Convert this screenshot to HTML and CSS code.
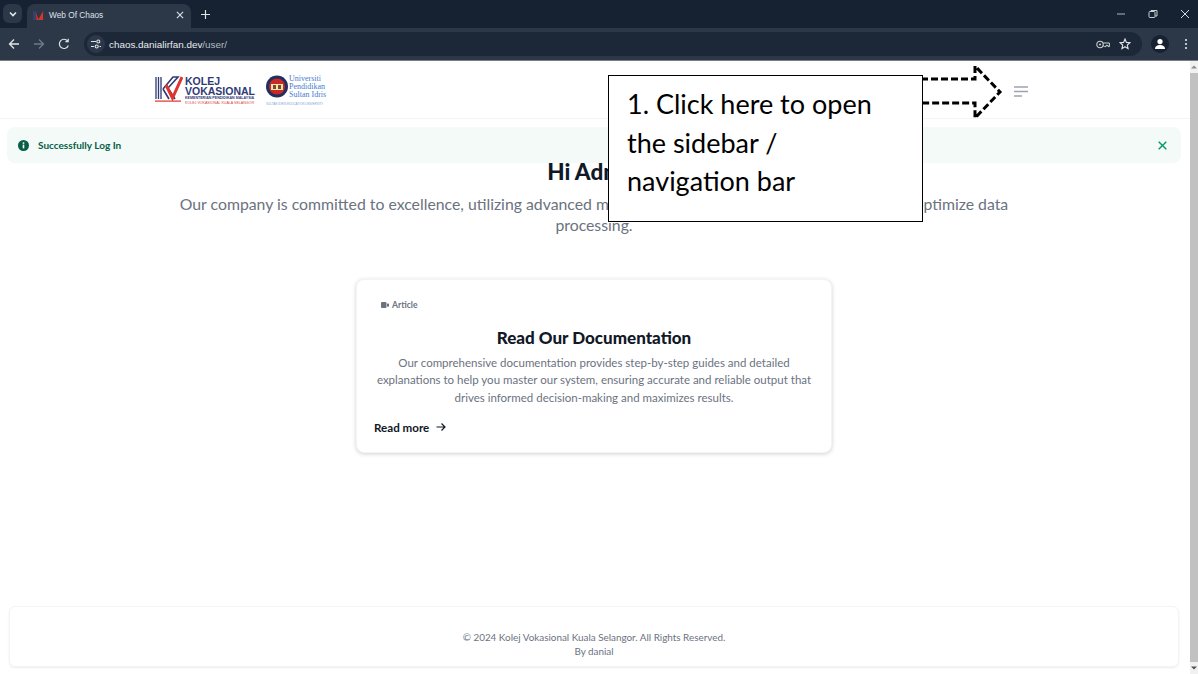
FILE: index.html
```html
<!DOCTYPE html>
<html lang="en">
<head>
    <meta charset="UTF-8">
    <meta name="viewport" content="width=device-width, initial-scale=1.0">
    <title>Web Of Chaos</title>
    <link rel="stylesheet" href="styles.css">
</head>
<body>
    <div class="tab-strip">
        <div class="tab-search">
            <svg width="10" height="10" viewBox="0 0 10 10"><path d="M2 3.5 5 6.5 8 3.5" fill="none" stroke="#e3e8ee" stroke-width="1.6"/></svg>
        </div>
        <div class="tab">
            <svg class="favicon" width="11" height="11" viewBox="0 0 12 12"><rect x="0" y="1" width="4" height="10" fill="#3a3f66"/><path d="M3 3 6 10 11 1 11 11 4 11Z" fill="#d9342b"/></svg>
            <span class="tab-title">Web Of Chaos</span>
            <svg class="tab-close" width="8" height="8" viewBox="0 0 9 9"><path d="M1 1 8 8M8 1 1 8" stroke="#dfe4ea" stroke-width="1.2"/></svg>
        </div>
        <svg class="new-tab" width="9" height="9" viewBox="0 0 10 10"><path d="M5 0V10M0 5H10" stroke="#dfe4ea" stroke-width="1.3"/></svg>
        <div class="window-buttons">
            <svg width="10" height="10" viewBox="0 0 10 10"><path d="M1 5H9" stroke="#aeb6bf" stroke-width="1"/></svg>
            <svg width="10" height="10" viewBox="0 0 10 10"><rect x="1" y="2.5" width="6" height="6" rx="1" fill="none" stroke="#c8ced6"/><path d="M3 2.5V1.5H9V7H7" fill="none" stroke="#c8ced6"/></svg>
            <svg width="10" height="10" viewBox="0 0 10 10"><path d="M1 1 9 9M9 1 1 9" stroke="#d5dae0" stroke-width="1"/></svg>
        </div>
    </div>

    <div class="toolbar">
        <svg width="12" height="12" viewBox="0 0 12 12"><path d="M11 6H1.5M6 1.5 1.5 6 6 10.5" fill="none" stroke="#dfe4ea" stroke-width="1.3"/></svg>
        <svg width="12" height="12" viewBox="0 0 12 12"><path d="M1 6H10.5M6 1.5 10.5 6 6 10.5" fill="none" stroke="#6f7a87" stroke-width="1.3"/></svg>
        <svg width="12" height="12" viewBox="0 0 12 12"><path d="M10.3 7.5A4.6 4.6 0 1 1 9.6 3M10.2 .8V3.6H7.4" fill="none" stroke="#dfe4ea" stroke-width="1.2"/></svg>
        <div class="omnibox">
            <div class="site-info">
                <svg width="12" height="12" viewBox="0 0 12 12"><path d="M1 3.5H6M1 8.5H4M9.5 8.5H11" stroke="#dfe4ea" stroke-width="1.1"/><circle cx="8.3" cy="3.5" r="1.5" fill="none" stroke="#dfe4ea" stroke-width="1.1"/><circle cx="6.7" cy="8.5" r="1.5" fill="none" stroke="#dfe4ea" stroke-width="1.1"/></svg>
            </div>
            <span class="url">chaos.danialirfan.dev<span class="url-path">/user/</span></span>
            <svg class="omni-key" width="14" height="9" viewBox="0 0 14 9"><circle cx="4" cy="4.5" r="3.2" fill="none" stroke="#cdd3da" stroke-width="1.1"/><circle cx="4" cy="4.5" r="1" fill="#cdd3da"/><path d="M7.2 3H13.4V6.6H12V5.4H10V6.6H8.6L7.2 5.6" fill="none" stroke="#cdd3da" stroke-width="1"/></svg>
            <svg class="omni-star" width="12" height="12" viewBox="0 0 12 12"><path d="M6 1 7.4 4.4 11 4.7 8.3 7 9.1 10.6 6 8.7 2.9 10.6 3.7 7 1 4.7 4.6 4.4Z" fill="none" stroke="#dfe4ea" stroke-width="1.1"/></svg>
        </div>
        <div class="profile">
            <svg width="12" height="12" viewBox="0 0 12 12"><circle cx="6" cy="3.6" r="2.6" fill="#fff"/><path d="M1 11C1 8 3.5 7 6 7S11 8 11 11Z" fill="#fff"/></svg>
        </div>
        <svg width="4" height="12" viewBox="0 0 4 12"><circle cx="2" cy="2" r="1.1" fill="#dfe4ea"/><circle cx="2" cy="6" r="1.1" fill="#dfe4ea"/><circle cx="2" cy="10" r="1.1" fill="#dfe4ea"/></svg>
    </div>

    <div class="viewport">
        <div class="page">
            <header class="site-header">
                <div class="logos">
                    <div class="logo-kv">
                        <svg width="28" height="27" viewBox="0 0 28 27">
                            <path d="M1 1V23M3.5 1V23M6 1V23" stroke="#2f3a75" stroke-width="1.3"/>
                            <path d="M8 13 18 1H23L13 12 20 23M8 13 14 23" fill="none" stroke="#2f3a75" stroke-width="1.6"/>
                            <path d="M11 9 17.5 22 27 1" fill="none" stroke="#e0342c" stroke-width="3"/>
                            <rect x="0" y="24.5" width="26" height="1.2" fill="#e0342c"/>
                        </svg>
                        <div class="kv-words">
                            <span class="kv-big">KOLEJ</span>
                            <span class="kv-big">VOKASIONAL</span>
                            <span class="kv-small">KEMENTERIAN PENDIDIKAN MALAYSIA</span>
                            <span class="kv-red">KOLEJ VOKASIONAL KUALA SELANGOR</span>
                        </div>
                    </div>
                    <div class="logo-upsi">
                        <svg width="22" height="23" viewBox="0 0 22 23">
                            <circle cx="11" cy="11.5" r="11" fill="#23305f"/>
                            <circle cx="11" cy="11.5" r="8" fill="#c92a25"/>
                            <rect x="5" y="9" width="12" height="6" fill="#f3e3b0"/>
                            <rect x="7" y="10" width="3" height="4" fill="#7a4b2a"/>
                            <rect x="12" y="10" width="3" height="4" fill="#7a4b2a"/>
                        </svg>
                        <div class="upsi-words">
                            <span>Universiti</span>
                            <span>Pendidikan</span>
                            <span>Sultan Idris</span>
                            <span class="upsi-small">SULTAN IDRIS EDUCATION UNIVERSITY</span>
                        </div>
                    </div>
                </div>
                <button class="menu-btn" aria-label="Open sidebar">
                    <svg width="14" height="11" viewBox="0 0 14 11"><path d="M0 1H14M0 5.5H14M0 10H8" stroke="#9ca3af" stroke-width="1.4"/></svg>
                </button>
            </header>

            <div class="alert">
                <svg width="11" height="11" viewBox="0 0 11 11"><circle cx="5.5" cy="5.5" r="5.5" fill="#065f46"/><rect x="4.7" y="4.6" width="1.6" height="3.8" fill="#fff"/><rect x="4.7" y="2.3" width="1.6" height="1.5" fill="#fff"/></svg>
                <p>Successfully Log In</p>
                <svg class="alert-close" width="9" height="9" viewBox="0 0 9 9"><path d="M.7 .7 8.3 8.3M8.3 .7 .7 8.3" stroke="#059669" stroke-width="1.4"/></svg>
            </div>

            <section class="hero">
                <h1>Hi Admin</h1>
                <p>Our company is committed to excellence, utilizing advanced mathematical techniques and chaos theory to optimize data processing.</p>
            </section>

            <div class="card">
                <div class="card-tag">
                    <svg width="8" height="6" viewBox="0 0 8 6"><rect x="0" y="0" width="5.5" height="6" rx="1" fill="#6b7280"/><rect x="6" y="1.6" width="2" height="3" fill="#6b7280"/></svg>
                    <span>Article</span>
                </div>
                <h2>Read Our Documentation</h2>
                <p>Our comprehensive documentation provides step-by-step guides and detailed explanations to help you master our system, ensuring accurate and reliable output that drives informed decision-making and maximizes results.</p>
                <a class="read-more" href="#">Read more
                    <svg width="10" height="10" viewBox="0 0 10 10"><path d="M.5 5H9M5.5 1.5 9 5 5.5 8.5" fill="none" stroke="#111827" stroke-width="1.2"/></svg>
                </a>
            </div>

            <footer class="site-footer">
                <p>© 2024 Kolej Vokasional Kuala Selangor. All Rights Reserved.</p>
                <p>By danial</p>
            </footer>
        </div>

        <div class="scrollbar">
            <svg width="8" height="6" viewBox="0 0 8 6"><path d="M1 4.5 4 1.5 7 4.5Z" fill="#8a8a8a"/></svg>
            <div class="scroll-thumb"></div>
            <svg width="8" height="6" viewBox="0 0 8 6"><path d="M1 1.5 4 4.5 7 1.5Z" fill="#505050"/></svg>
        </div>

        <!-- tutorial callout drawn on top of the screenshot -->
        <svg class="callout-arrow" width="82" height="56" viewBox="0 0 82 56">
            <path d="M0 15H54V2L79 28 54 54V39H0" fill="none" stroke="#000" stroke-width="3" stroke-dasharray="7 3"/>
        </svg>
        <div class="callout">1. Click here to open the sidebar / navigation bar</div>
    </div>
</body>
</html>
```

FILE: styles.css
```css
*{
    margin: 0;
    box-sizing: border-box;
}

body{
    height: 674px;
    overflow: hidden;
    display: flex;
    flex-direction: column;
    font-family: "Lato", "Open Sans", sans-serif;
    background-color: white;
}

/* browser top */
.tab-strip{
    height: 28px;
    flex-shrink: 0;
    display: flex;
    align-items: center;
    padding-left: 3px;
    background-color: rgb(22, 34, 49);
}

.tab-search{
    width: 19px;
    height: 19px;
    margin-top: -1px;
    border-radius: 6px;
    display: flex;
    align-items: center;
    justify-content: center;
    background-color: rgb(44, 56, 72);
}

.tab{
    width: 164px;
    height: 24px;
    margin-left: 5px;
    margin-top: 4px;
    padding: 0 7px 2px 6px;
    border-radius: 8px 8px 0 0;
    display: flex;
    align-items: center;
    gap: 5px;
    background-color: rgb(44, 56, 72);
}

.tab-title{
    flex: 1;
    font-family: "Liberation Sans", sans-serif;
    font-size: 8.3px;
    color: rgb(222, 227, 233);
}

.new-tab{
    margin-left: 10px;
}

.window-buttons{
    margin-left: auto;
    display: flex;
    gap: 22px;
    padding-right: 8px;
}

.toolbar{
    height: 33px;
    flex-shrink: 0;
    display: flex;
    align-items: center;
    gap: 13px;
    padding: 0 10px 0 8px;
    border-bottom: 1px solid rgb(120, 126, 134);
    background-color: rgb(44, 56, 72);
}

.toolbar > svg{
    flex-shrink: 0;
}

.omnibox{
    flex: 1;
    height: 24px;
    margin-left: 1px;
    padding-right: 11px;
    border-radius: 12px;
    display: flex;
    align-items: center;
    background-color: rgb(28, 40, 55);
}

.site-info{
    width: 18px;
    height: 18px;
    margin-left: 3px;
    border-radius: 50%;
    display: flex;
    align-items: center;
    justify-content: center;
    background-color: rgb(44, 56, 72);
}

.url{
    margin-left: 4px;
    font-family: "Liberation Sans", sans-serif;
    font-size: 9.9px;
    color: rgb(232, 236, 240);
}

.url-path{
    color: rgb(178, 186, 195);
}

.omni-key{
    margin-left: auto;
}

.omni-star{
    margin-left: 9px;
}

.profile{
    width: 18px;
    height: 18px;
    margin: 0 2px 0 -4px;
    border-radius: 50%;
    display: flex;
    align-items: center;
    justify-content: center;
    background-color: rgb(22, 34, 49);
}

/* page */
.viewport{
    flex: 1;
    position: relative;
    display: flex;
    min-height: 0;
}

.page{
    flex: 1;
    display: flex;
    flex-direction: column;
    min-width: 0;
}

.site-header{
    height: 58px;
    flex-shrink: 0;
    display: flex;
    align-items: center;
    justify-content: space-between;
    padding: 0 162px 0 155px;
    border-bottom: 1px solid rgb(243, 244, 246);
}

.logos{
    display: flex;
    align-items: center;
    gap: 11px;
    margin-top: 1px;
}

.logo-kv{
    display: flex;
    align-items: flex-start;
    gap: 2px;
}

.kv-words{
    display: flex;
    flex-direction: column;
    font-family: "Liberation Sans", sans-serif;
}

.kv-big{
    font-size: 10.5px;
    font-weight: 700;
    line-height: 10px;
    color: rgb(47, 58, 117);
}

.kv-small{
    font-size: 3.6px;
    line-height: 4px;
    font-weight: 700;
    color: rgb(47, 58, 117);
    white-space: nowrap;
}

.kv-red{
    margin-top: 1px;
    font-size: 3.6px;
    line-height: 4px;
    color: rgb(214, 72, 60);
    white-space: nowrap;
}

.logo-upsi{
    display: flex;
    align-items: flex-start;
    gap: 1px;
}

.upsi-words{
    display: flex;
    flex-direction: column;
    font-family: "Liberation Serif", serif;
    font-size: 8px;
    line-height: 8px;
    color: rgb(70, 125, 205);
    white-space: nowrap;
}

.upsi-small{
    margin: 3px 0 0 -23px;
    font-family: "Liberation Sans", sans-serif;
    font-size: 3px;
    line-height: 4px;
    color: rgb(130, 165, 215);
}

.menu-btn{
    padding: 0;
    margin-top: 4px;
    display: flex;
    border: none;
    background: none;
    cursor: pointer;
}

.alert{
    height: 36px;
    flex-shrink: 0;
    margin: 8px 9px 0 7px;
    padding: 0 14px 0 11px;
    border-radius: 8px;
    display: flex;
    align-items: center;
    gap: 9px;
    background-color: rgb(243, 250, 248);
}

.alert p{
    flex: 1;
    font-size: 10px;
    font-weight: 700;
    color: rgb(6, 95, 70);
}

.hero{
    padding: 0 171px 0 169px;
    text-align: center;
}

.hero h1{
    height: 24px;
    margin-top: -3px;
    font-size: 22.5px;
    font-weight: 900;
    line-height: 24px;
    color: rgb(17, 24, 39);
}

.hero p{
    margin-top: 9px;
    font-size: 15.8px;
    line-height: 21px;
    color: rgb(107, 114, 128);
}

.card{
    width: 476px;
    height: 174px;
    flex-shrink: 0;
    margin: 44px 0 0 356px;
    padding: 18px 17px 0;
    border: 1px solid rgb(243, 244, 246);
    border-radius: 8px;
    box-shadow: 0 1px 4px rgba(0, 0, 0, 0.18);
    background-color: white;
}

.card-tag{
    display: flex;
    align-items: center;
    gap: 3px;
    padding-left: 7px;
    font-size: 8.6px;
    font-weight: 700;
    line-height: 14px;
    color: rgb(107, 114, 128);
}

.card h2{
    margin-top: 15px;
    font-size: 17px;
    font-weight: 900;
    line-height: 21px;
    text-align: center;
    color: rgb(17, 24, 39);
}

.card p{
    margin-top: 6px;
    font-size: 11.5px;
    line-height: 17.3px;
    text-align: center;
    color: rgb(107, 114, 128);
}

.read-more{
    margin-top: 14px;
    display: inline-flex;
    align-items: center;
    gap: 7px;
    font-size: 11.6px;
    font-weight: 700;
    line-height: 15px;
    text-decoration: none;
    color: rgb(17, 24, 39);
}

.site-footer{
    height: 61px;
    flex-shrink: 0;
    margin: auto 11px 7px 9px;
    padding-top: 23px;
    border: 1px solid rgb(243, 244, 246);
    border-radius: 6px;
    box-shadow: 0 1px 2px rgba(0, 0, 0, 0.08);
    text-align: center;
    font-size: 9.9px;
    line-height: 14px;
    color: rgb(107, 114, 128);
}

.scrollbar{
    width: 8px;
    flex-shrink: 0;
    display: flex;
    flex-direction: column;
    align-items: center;
    padding: 3px 0;
    background-color: rgb(241, 241, 241);
}

.scroll-thumb{
    flex: 1;
    width: 8px;
    margin: 3px 0;
    background-color: rgb(193, 193, 193);
}

/* callout */
.callout{
    position: absolute;
    left: 608px;
    top: 14px;
    width: 315px;
    height: 147px;
    padding: 9px 40px 0 18px;
    border: 1px solid black;
    font-family: "Lato", "Open Sans", sans-serif;
    font-size: 27px;
    line-height: 38.6px;
    color: black;
    background-color: white;
}

.callout-arrow{
    position: absolute;
    left: 921px;
    top: 3px;
}
```
